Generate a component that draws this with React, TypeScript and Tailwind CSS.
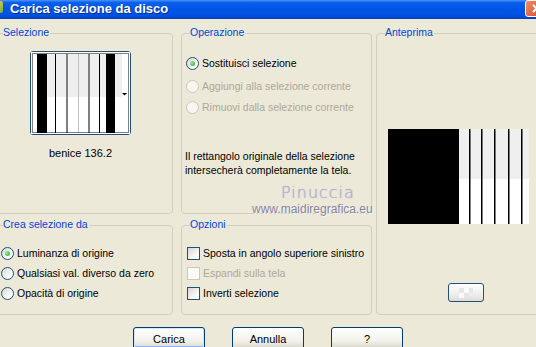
import type { ReactNode } from "react"

type OptionProps = {
  label: string
  checked?: boolean
  disabled?: boolean
}

function Radio({ label, checked, disabled }: OptionProps) {
  return (
    <div className="flex h-[16px] items-center gap-[3px] whitespace-nowrap">
      <span
        className={
          disabled
            ? "flex h-[13px] w-[13px] shrink-0 items-center justify-center rounded-full border border-[#cac8bb] bg-[#f7f6f1]"
            : "flex h-[13px] w-[13px] shrink-0 items-center justify-center rounded-full border border-[#1c5180] bg-[linear-gradient(135deg,#d6d5cf,#ffffff_75%)]"
        }
      >
        {checked && (
          <span className="h-[5px] w-[5px] rounded-full bg-[radial-gradient(circle_at_35%_35%,#9cf08f,#21a121)]" />
        )}
      </span>
      <span className={disabled ? "text-[#aca899]" : "text-black"}>{label}</span>
    </div>
  )
}

function Checkbox({ label, disabled }: OptionProps) {
  return (
    <div className="flex h-[16px] items-center gap-[3px] whitespace-nowrap">
      <span
        className={
          disabled
            ? "h-[13px] w-[13px] shrink-0 border border-[#cac8bb] bg-[#fbfaf6]"
            : "h-[13px] w-[13px] shrink-0 border border-[#1c5180] bg-[linear-gradient(135deg,#d6d5cf,#ffffff_80%)]"
        }
      />
      <span className={disabled ? "text-[#aca899]" : "text-black"}>{label}</span>
    </div>
  )
}

function Group({
  label,
  className,
  children,
}: {
  label: string
  className: string
  children?: ReactNode
}) {
  return (
    <div className={`relative rounded-[4px] border border-[#d0d0bf] ${className}`}>
      <span className="absolute -top-[8px] left-[8px] bg-[#ece9d8] pr-[1px] leading-[13px] whitespace-nowrap text-[#0046d5]">
        {label}
      </span>
      {children}
    </div>
  )
}

function DialogButton({ label, isDefault }: { label: string; isDefault?: boolean }) {
  return (
    <button
      type="button"
      className={
        isDefault
          ? "h-[23px] w-[72px] rounded-[3px] border border-[#003c74] bg-[linear-gradient(to_bottom,#ffffff,#f3f2ec_60%,#d8d4c8)] text-black shadow-[inset_0_0_0_1px_#cee7ff,inset_0_-2px_0_1px_#90b4ec]"
          : "h-[23px] w-[72px] rounded-[3px] border border-[#003c74] bg-[linear-gradient(to_bottom,#ffffff,#f3f2ec_60%,#d8d4c8)] text-black"
      }
    >
      {label}
    </button>
  )
}

function Thumbnail() {
  return (
    <svg width="99" height="82" viewBox="0 0 99 82">
      <rect x="0" y="0" width="99" height="82" fill="#ffffff" />
      <rect x="6" y="2" width="85" height="43" fill="#efefef" />
      <rect x="6" y="45" width="85" height="36" fill="#ffffff" />
      <rect x="6" y="2" width="10" height="79" fill="#000000" />
      <rect x="24" y="2" width="1" height="79" fill="#000000" />
      <rect x="35" y="2" width="2" height="79" fill="#808080" />
      <rect x="47" y="2" width="1" height="79" fill="#c0c0c0" />
      <rect x="57" y="2" width="2" height="79" fill="#808080" />
      <rect x="68" y="2" width="1" height="79" fill="#000000" />
      <rect x="75" y="2" width="9" height="79" fill="#000000" />
      <rect
        x="1.5"
        y="1.5"
        width="96"
        height="79"
        fill="none"
        stroke="#000000"
        strokeWidth="1"
        strokeDasharray="1 1"
      />
      <polygon points="91,41 96,41 93.5,43.5" fill="#000000" />
    </svg>
  )
}

function Preview() {
  return (
    <svg width="141" height="95" viewBox="0 0 141 95">
      <rect x="0" y="0" width="141" height="50" fill="#efefef" />
      <rect x="0" y="50" width="141" height="45" fill="#ffffff" />
      <rect x="0" y="0" width="71" height="95" fill="#000000" />
      {[81, 93, 106, 120, 133].map((x) => (
        <rect key={x} x={x} y="0" width="1.5" height="95" fill="#000000" />
      ))}
    </svg>
  )
}

export default function App() {
  return (
    <div className="relative h-[347px] w-[536px] overflow-hidden bg-[#ece9d8] font-['Liberation_Sans',Arial,sans-serif] text-[10.5px] leading-[14px] text-black">
      {/* title bar */}
      <div className="flex h-[19px] items-start border-b border-[#0a3fb8] bg-[linear-gradient(to_bottom,#4a93fb_0%,#0a61ec_14%,#0056e6_45%,#0053e2_80%,#0046d0_100%)]">
        <span className="mt-[1px] ml-[-6px] h-[12px] w-[9px] rounded-[2px] bg-[linear-gradient(135deg,#f6d44c,#6cae3a)]" />
        <span className="ml-[7px] text-[13px] leading-[17px] font-bold text-white [text-shadow:1px_1px_0_#0a2c8c]">
          Carica selezione da disco
        </span>
        <span className="ml-auto mr-[-12px] flex h-[17px] w-[23px] items-center justify-center rounded-[3px] border border-white bg-[linear-gradient(135deg,#f08a6a,#d8431c)]">
          <svg width="9" height="9" viewBox="0 0 9 9">
            <path d="M1 1 L8 8 M8 1 L1 8" stroke="#ffffff" strokeWidth="2" />
          </svg>
        </span>
      </div>

      <div className="mt-[14px] flex">
        {/* left column */}
        <div className="ml-[-6px] flex w-[179px] shrink-0 flex-col gap-[11px]">
          <Group label="Selezione" className="h-[181px]">
            <div className="ml-[35px] mt-[17px] flex w-[101px] flex-col items-center">
              <div className="h-[84px] w-[101px] rounded-[3px] border border-[#1c5180] bg-white">
                <Thumbnail />
              </div>
              <span className="mt-[11px] text-[11px]">benice 136.2</span>
            </div>
          </Group>
          <Group label="Crea selezione da" className="h-[90px]">
            <div className="mt-[19px] flex flex-col gap-[4px] pl-[6px]">
              <Radio label="Luminanza di origine" checked />
              <Radio label="Qualsiasi val. diverso da zero" />
              <Radio label="Opacità di origine" />
            </div>
          </Group>
        </div>

        {/* middle column */}
        <div className="ml-[8px] flex w-[191px] shrink-0 flex-col gap-[11px]">
          <Group label="Operazione" className="h-[181px]">
            <div className="flex flex-col pl-[4px]">
              <div className="mt-[21px]">
                <Radio label="Sostituisci selezione" checked />
              </div>
              <div className="mt-[7px]">
                <Radio label="Aggiungi alla selezione corrente" disabled />
              </div>
              <div className="mt-[5px]">
                <Radio label="Rimuovi dalla selezione corrente" disabled />
              </div>
            </div>
            <p className="mt-[34px] pl-[3px] leading-[14px] whitespace-nowrap">
              Il rettangolo originale della selezione
              <br />
              intersecherà completamente la tela.
            </p>
          </Group>
          <Group label="Opzioni" className="h-[90px]">
            <div className="mt-[19px] flex flex-col gap-[4px] pl-[5px]">
              <Checkbox label="Sposta in angolo superiore sinistro" />
              <Checkbox label="Espandi sulla tela" disabled />
              <Checkbox label="Inverti selezione" />
            </div>
          </Group>
        </div>

        {/* preview */}
        <Group label="Anteprima" className="ml-[4px] h-[282px] w-[170px] shrink-0">
          <div className="ml-[11px] mt-[95px] flex">
            <Preview />
          </div>
          <div className="ml-[71px] mt-[59px] flex h-[19px] w-[36px] items-center justify-center rounded-[3px] border border-[#1c5180] bg-[linear-gradient(to_bottom,#ffffff,#ecebe6_70%,#dedbd2)]">
            <svg width="14" height="10" viewBox="0 0 14 10">
              <rect x="0" y="0" width="5" height="5" fill="#e6e6e6" />
              <rect x="5" y="5" width="5" height="5" fill="#e6e6e6" />
              <rect x="10" y="0" width="4" height="5" fill="#e6e6e6" />
              <rect x="5" y="0" width="5" height="5" fill="#fafafa" />
              <rect x="0" y="5" width="5" height="5" fill="#fafafa" />
            </svg>
          </div>
        </Group>
      </div>

      {/* buttons */}
      <div className="mt-[12px] flex gap-[27px] pl-[133px] text-[11px]">
        <DialogButton label="Carica" isDefault />
        <DialogButton label="Annulla" />
        <DialogButton label="?" />
      </div>

      {/* watermark */}
      <div className="absolute left-[281px] top-[184px] font-['DejaVu_Sans',sans-serif] text-[16px] leading-[18px] font-light tracking-[1px] text-[#b6b7d6] [text-shadow:0_0_1px_#9596b2]">
        Pinuccia
      </div>
      <div className="absolute left-[252px] top-[203px] text-[12px] leading-[12px] text-[#85859c] [text-shadow:1px_1px_0_#f4f4f4]">
        www.maidiregrafica.eu
      </div>
    </div>
  )
}
